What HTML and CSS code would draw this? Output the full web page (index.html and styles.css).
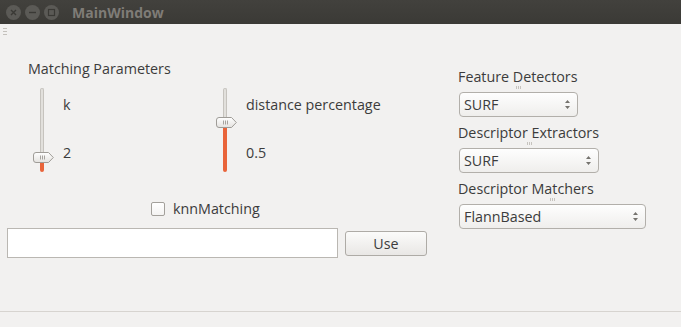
FILE: index.html
```html
<!DOCTYPE html>
<html>
<head>
<meta charset="utf-8">
<link rel="stylesheet" href="styles.css">
</head>
<body>
<div class="titlebar">
  <div class="wbtns">
    <span class="wbtn"><svg width="15" height="15" viewBox="0 0 15 15"><path d="M5 5 L10 10 M10 5 L5 10" stroke="#3a3935" stroke-width="1.4" fill="none"/></svg></span>
    <span class="wbtn"><svg width="15" height="15" viewBox="0 0 15 15"><path d="M4 7.5 H11" stroke="#3a3935" stroke-width="1.4" fill="none"/></svg></span>
    <span class="wbtn"><svg width="15" height="15" viewBox="0 0 15 15"><rect x="4.5" y="4.5" width="6" height="6" stroke="#3a3935" stroke-width="1.2" fill="none"/></svg></span>
  </div>
  <span class="title">MainWindow</span>
</div>
<div class="toolbar"><span class="tgrip"></span></div>
<div class="content">
  <div class="left">
    <div class="heading">Matching Parameters</div>
    <div class="sliders">
      <div class="sgroup g1">
        <div class="slider">
          <div class="groove top" style="height:64px"></div>
          <svg class="handle" width="21" height="11" viewBox="0 0 21 11"><defs><linearGradient id="hg1" x1="0" y1="0" x2="0" y2="1"><stop offset="0" stop-color="#ffffff"/><stop offset="1" stop-color="#e4e2df"/></linearGradient></defs><path d="M3 0.5 H15.5 L20.3 5.5 L15.5 10.5 H3 Q0.5 10.5 0.5 8 V3 Q0.5 0.5 3 0.5 Z" fill="url(#hg1)" stroke="#9f9c97"/><path d="M7.5 3.5 V7.5 M9.5 3.5 V7.5 M11.5 3.5 V7.5" stroke="#a6a39e" stroke-width="1"/></svg>
          <div class="groove fill" style="height:9px"></div>
        </div>
        <div class="slabels"><span>k</span><span>2</span></div>
      </div>
      <div class="sgroup g2">
        <div class="slider">
          <div class="groove top" style="height:29px"></div>
          <svg class="handle" width="21" height="11" viewBox="0 0 21 11"><defs><linearGradient id="hg2" x1="0" y1="0" x2="0" y2="1"><stop offset="0" stop-color="#ffffff"/><stop offset="1" stop-color="#e4e2df"/></linearGradient></defs><path d="M3 0.5 H15.5 L20.3 5.5 L15.5 10.5 H3 Q0.5 10.5 0.5 8 V3 Q0.5 0.5 3 0.5 Z" fill="url(#hg2)" stroke="#9f9c97"/><path d="M7.5 3.5 V7.5 M9.5 3.5 V7.5 M11.5 3.5 V7.5" stroke="#a6a39e" stroke-width="1"/></svg>
          <div class="groove fill" style="height:44px"></div>
        </div>
        <div class="slabels"><span>distance percentage</span><span>0.5</span></div>
      </div>
    </div>
    <div class="checkrow"><span class="checkbox"></span><span>knnMatching</span></div>
    <div class="inputrow">
      <div class="textinput"></div>
      <div class="button">Use</div>
    </div>
  </div>
  <div class="right">
    <div class="field">
      <div class="flabel">Feature Detectors</div>
      <div class="fgrip w1"><span></span></div>
      <div class="combo w1"><span>SURF</span><svg width="5" height="11" viewBox="0 0 5 11"><path d="M0 4 L2.5 1 L5 4 Z M0 7 L2.5 10 L5 7 Z" fill="#75736e"/></svg></div>
    </div>
    <div class="field">
      <div class="flabel">Descriptor Extractors</div>
      <div class="fgrip w2"><span></span></div>
      <div class="combo w2"><span>SURF</span><svg width="5" height="11" viewBox="0 0 5 11"><path d="M0 4 L2.5 1 L5 4 Z M0 7 L2.5 10 L5 7 Z" fill="#75736e"/></svg></div>
    </div>
    <div class="field">
      <div class="flabel">Descriptor Matchers</div>
      <div class="fgrip w3"><span></span></div>
      <div class="combo w3"><span>FlannBased</span><svg width="5" height="11" viewBox="0 0 5 11"><path d="M0 4 L2.5 1 L5 4 Z M0 7 L2.5 10 L5 7 Z" fill="#75736e"/></svg></div>
    </div>
  </div>
</div>
<div class="statusbar"></div>
</body>
</html>
```
FILE: styles.css
```css
html, body {
  margin: 0;
  padding: 0;
}
body {
  width: 681px;
  height: 327px;
  overflow: hidden;
  background: #f2f1f0;
  font-family: "Open Sans", "DejaVu Sans", sans-serif;
  font-size: 14.3px;
  line-height: 17px;
  color: #3c3c3c;
  display: flex;
  flex-direction: column;
}
.titlebar {
  height: 24px;
  background: linear-gradient(#42413d, #3b3a36);
  display: flex;
  align-items: center;
  flex-shrink: 0;
}
.wbtns {
  display: flex;
  gap: 4px;
  margin-left: 6px;
  margin-top: 1px;
}
.wbtn {
  width: 15px;
  height: 15px;
  border-radius: 50%;
  background: #5b5a56;
  display: block;
}
.wbtn svg { display: block; }
.title {
  margin-left: 13px;
  font-weight: bold;
  font-size: 14px;
  color: #7f7c77;
}
.toolbar {
  height: 12px;
  flex-shrink: 0;
  padding-left: 3px;
  padding-top: 4px;
  box-sizing: border-box;
}
.tgrip {
  display: block;
  width: 4px;
  height: 7px;
  background: repeating-linear-gradient(#c4c1bc 0 1px, transparent 1px 3px);
}
.content {
  display: flex;
  flex: 1;
}
.left {
  width: 421px;
  margin-left: 7px;
  display: flex;
  flex-direction: column;
}
.heading {
  margin-top: 24px;
  margin-left: 21px;
}
.sliders {
  display: flex;
  margin-top: 11px;
}
.sgroup {
  display: flex;
}
.g1 { margin-left: 26px; width: 183px; }
.slider {
  width: 21px;
  height: 84px;
  display: flex;
  flex-direction: column;
}
.groove {
  width: 4px;
  margin-left: 7px;
  box-sizing: border-box;
}
.groove.top {
  background: #e2e0dc;
  border-left: 1px solid #c6c3be;
  border-right: 1px solid #c6c3be;
  border-top: 1px solid #c6c3be;
  border-radius: 2px 2px 0 0;
}
.groove.fill {
  background: #e9643a;
  border-radius: 0 0 2px 2px;
}
.handle { display: block; flex-shrink: 0; }
.slabels {
  margin-left: 9px;
  display: flex;
  flex-direction: column;
  padding-top: 8px;
  gap: 31px;
}
.checkrow {
  margin-top: 28px;
  margin-left: 144px;
  display: flex;
  align-items: center;
  gap: 8px;
}
.checkbox {
  width: 14px;
  height: 14px;
  box-sizing: border-box;
  border: 1px solid #a3a09b;
  border-radius: 2px;
  background: linear-gradient(#ffffff, #f4f3f2);
}
.inputrow {
  margin-top: 11px;
  display: flex;
  align-items: center;
  gap: 7px;
}
.textinput {
  width: 331px;
  height: 30px;
  box-sizing: border-box;
  background: #ffffff;
  border: 1px solid #bab7b2;
}
.button {
  width: 82px;
  height: 25px;
  box-sizing: border-box;
  border: 1px solid #aeaba6;
  border-radius: 3px;
  background: linear-gradient(#fbfbfa, #e9e7e5);
  display: flex;
  align-items: center;
  justify-content: center;
}
.right {
  margin-left: 30px;
  padding-top: 32px;
  display: flex;
  flex-direction: column;
  gap: 7px;
}
.field {
  display: flex;
  flex-direction: column;
}
.fgrip {
  height: 7px;
  display: flex;
  justify-content: center;
  align-items: center;
  margin-left: 1px;
}
.fgrip span {
  width: 5px;
  height: 3px;
  background: repeating-linear-gradient(90deg, #c6c3be 0 1px, transparent 1px 2px);
  margin-top: -2px;
}
.combo {
  height: 25px;
  box-sizing: border-box;
  margin-left: 1px;
  border: 1px solid #b2afaa;
  border-radius: 4px;
  background: linear-gradient(#fefefe, #efeeec);
  display: flex;
  align-items: center;
  justify-content: space-between;
  padding: 0 7px 0 4px;
}
.combo svg { display: block; }
.w1 { width: 119px; }
.w2 { width: 140px; }
.w3 { width: 187px; }
.statusbar {
  height: 15px;
  flex-shrink: 0;
  border-top: 1px solid #d7d4d0;
}
```
